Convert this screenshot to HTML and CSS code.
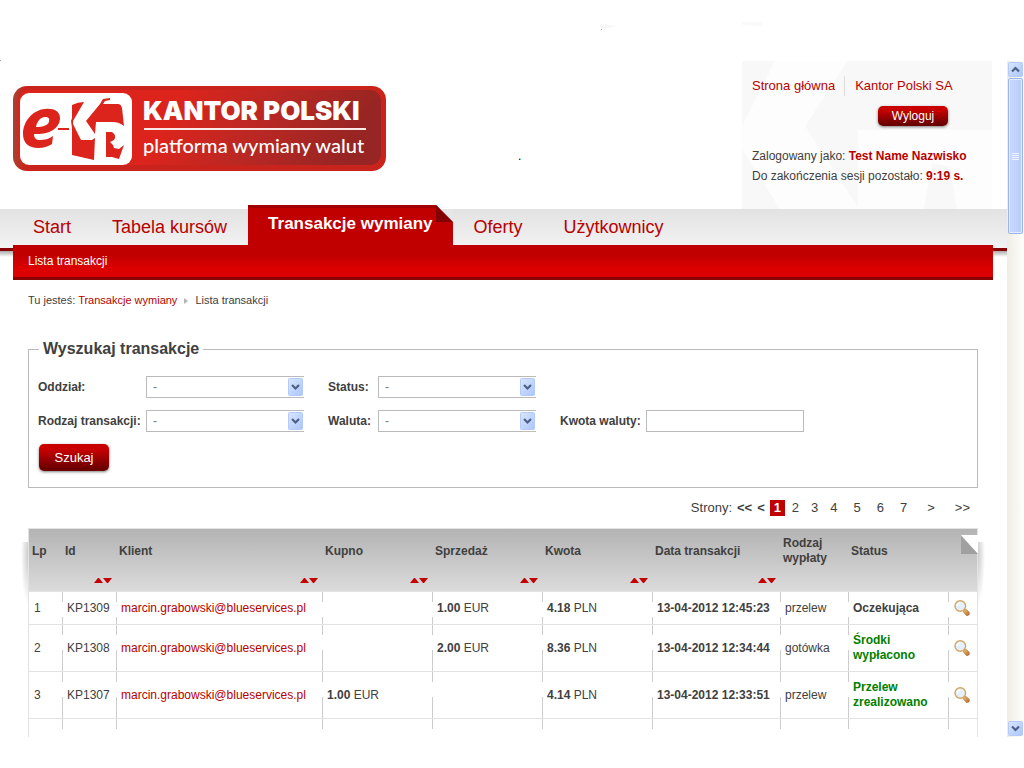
FILE: index.html
```html
<!DOCTYPE html>
<html lang="pl">
<head>
<meta charset="utf-8">
<title>Kantor Polski - Lista transakcji</title>
<link rel="stylesheet" href="styles.css">
</head>
<body>
<svg class="defs" width="0" height="0" aria-hidden="true">
  <defs>
    <linearGradient id="lens-handle" x1="0" y1="0" x2="1" y2="1"><stop offset="0" stop-color="#ecca7c"/><stop offset="1" stop-color="#b0622c"/></linearGradient>
    <symbol id="lens" viewBox="0 0 16 16">
      <path d="M9.500 10.500l1.500-1.500 1.500.8 3 2.800-.3 1.800-1.400 1.400-1.300-.1-2.700-3z" fill="url(#lens-handle)" stroke="#b97a3c" stroke-width=".7"/>
      <circle cx="6.300" cy="6" r="5.300" fill="#e4f0fb" stroke="#d5a562" stroke-width="1.400"/>
      <path d="M3.300 6.200a3 3 0 0 1 2.600-3" fill="none" stroke="#fff" stroke-width="1.200"/>
    </symbol>
    <symbol id="sort" viewBox="0 0 18 5"><path d="M0 5h9L5 0H4zM9 0h9l-4 5h-1z" fill="#c40000"/></symbol>
    <linearGradient id="xp-blue" x1="0" y1="0" x2="1" y2="1"><stop offset="0" stop-color="#dbe6ff"/><stop offset="1" stop-color="#a9c6fb"/></linearGradient>
    <symbol id="drop" viewBox="0 0 15 18"><rect x=".5" y=".5" width="14" height="17" rx="1" fill="url(#xp-blue)" stroke="#b4cafb"/><path d="M4 7l3.500 3.500L11 7" fill="none" stroke="#4d6185" stroke-width="2.200"/></symbol>
  </defs>
</svg>

<svg class="specks" viewBox="0 0 1024 61" preserveAspectRatio="xMinYMin" aria-hidden="true">
  <path d="M600 27l5-3 11 2-6 2-9 1z" fill="#f7f7f7"/><path d="M742 22h21v4l-21-1z" fill="#fafafa"/>
  <path d="M601 29h1v1h-1zM0 60h1v1H0z" fill="#aaa"/>
</svg>

<div class="window">
  <div class="page">
    <header class="top">
      <a class="logo" href="#" aria-label="Kantor Polski">
        <svg width="373" height="86" viewBox="0 0 373 86">
          <defs>
            <linearGradient id="lg" x1="0" y1="0" x2="1" y2=".12"><stop offset="0" stop-color="#dc241c"/><stop offset=".45" stop-color="#dc241c"/><stop offset=".72" stop-color="#b92824"/><stop offset="1" stop-color="#962523"/></linearGradient>
            <linearGradient id="le" x1="0" y1="0" x2="1" y2="0"><stop offset="0" stop-color="#a64334"/><stop offset=".03" stop-color="#c9241c"/><stop offset="1" stop-color="#c9241c"/></linearGradient>
          </defs>
          <rect y="0" width="373" height="85" rx="14" fill="url(#le)"/>
          <rect x="5" y="4" width="363" height="75" rx="11" fill="url(#lg)"/>
          <rect x="7" y="7" width="112" height="72" rx="9" fill="#fff"/>
          <path fill="#dc241c" fill-rule="evenodd" d="M47 32c0-7-7-10-15-9C19 24 10 36 10 48c0 9 6 14 15 14 6 0 11-2 14-4l1-8c-4 3-9 4-13 4-4 0-6-2-6-6 14 1 26-5 26-16zM23 41c1-6 5-10 9-10 3 0 5 1 4 4 0 4-6 6-13 6z"/>
          <path fill="#dc241c" d="M45 42h11v2H45zM59 19q6-3 12-3L60 35v3l8 16h11l3-2-1 22-22-5V42l-1-7 1-3zM73 35l14-17 3-5 7-1v2l-5 1-2 3h15q3 0 4 4l2 18q-5-4-11-4H83l-1 12z"/>
          <path fill="#dc241c" d="M93 46h6q5 3 2 8l-4 2q3 2 4 6l5 1 5-4-5 14-7-2h-6z"/>
          <text x="130" y="34" class="logo-name">KANTOR POLSKI</text>
          <path d="M131 42h222v2H131z" fill="#fbe9e7"/>
          <text x="130" y="67" class="logo-line">platforma wymiany walut</text>
        </svg>
      </a>
      <span class="dot">.</span>
      <div class="account">
        <svg class="watermark" viewBox="0 0 250 148" preserveAspectRatio="none" aria-hidden="true">
          <path d="M33 0h73L63 65l54 83H38L0 88V65zM116 69h134v79h-35l-7-42-18-4-8 46h-66z" fill="#fdfdfd"/>
        </svg>
        <nav class="quick">
          <a href="#">Strona główna</a>
          <a href="#">Kantor Polski SA</a>
        </nav>
        <button class="btn logout" type="button">Wyloguj</button>
        <p>Zalogowany jako: <strong>Test Name Nazwisko</strong></p>
        <p>Do zakończenia sesji pozostało: <strong>9:19 s.</strong></p>
      </div>
    </header>

    <div class="band">
      <nav class="tabs">
        <a href="#">Start</a>
        <a href="#">Tabela kursów</a>
        <a href="#" class="active">Transakcje wymiany<svg class="fold" width="17" height="17" viewBox="0 0 17 17" aria-hidden="true"><path d="M0 0h17v17z" fill="#fff"/><path d="M4 4h13v13z" fill="#e6e6e6"/><path d="M0 0v17h17z" fill="#840000"/></svg></a>
        <a href="#">Oferty</a>
        <a href="#">Użytkownicy</a>
      </nav>
      <nav class="subnav"><a href="#">Lista transakcji</a></nav>
    </div>

    <main>
      <nav class="crumbs">
        <span>Tu jesteś: <a href="#">Transakcje wymiany</a></span>
        <svg width="4" height="6" viewBox="0 0 4 6" aria-hidden="true"><path d="M0 0l4 3-4 3z" fill="#b5b5b5"/></svg>
        <span>Lista transakcji</span>
      </nav>

      <form>
        <fieldset>
          <legend>Wyszukaj transakcje</legend>
          <div class="fields">
            <label for="branch">Oddział:</label>
            <span class="pick"><select id="branch"><option>-</option></select><svg aria-hidden="true"><use href="#drop"/></svg></span>
            <label for="status">Status:</label>
            <span class="pick"><select id="status"><option>-</option></select><svg aria-hidden="true"><use href="#drop"/></svg></span>
            <label for="kind" class="first">Rodzaj transakcji:</label>
            <span class="pick"><select id="kind"><option>-</option></select><svg aria-hidden="true"><use href="#drop"/></svg></span>
            <label for="currency">Waluta:</label>
            <span class="pick"><select id="currency"><option>-</option></select><svg aria-hidden="true"><use href="#drop"/></svg></span>
            <label for="amount">Kwota waluty:</label>
            <input id="amount" type="text">
          </div>
          <button class="btn search" type="submit">Szukaj</button>
        </fieldset>
      </form>

      <nav class="pager">
        <span>Strony:</span><b>&lt;&lt;</b><b>&lt;</b><b class="current">1</b><a href="#">2</a><a href="#">3</a><a href="#">4</a><a href="#" class="wide">5</a><a href="#" class="wide">6</a><a href="#" class="wide">7</a><a href="#" class="step">&gt;</a><a href="#" class="step">&gt;&gt;</a>
      </nav>

      <div class="listing">
        <svg class="corner" width="17" height="19" viewBox="0 0 17 19" aria-hidden="true"><path d="M0 0h17v19z" fill="#fff"/><path d="M0 1v18h17z" fill="#a0a0a0"/></svg>
        <table>
          <colgroup><col class="c-lp"><col class="c-id"><col class="c-client"><col class="c-sum"><col class="c-sum"><col class="c-sum"><col class="c-date"><col class="c-kind"><col class="c-status"><col class="c-icon"></colgroup>
          <thead>
            <tr>
              <th><div>Lp</div></th>
              <th><div>Id</div><svg><use href="#sort"/></svg></th>
              <th><div>Klient</div><svg><use href="#sort"/></svg></th>
              <th><div>Kupno</div><svg><use href="#sort"/></svg></th>
              <th><div>Sprzedaż</div><svg><use href="#sort"/></svg></th>
              <th><div>Kwota</div><svg><use href="#sort"/></svg></th>
              <th><div>Data transakcji</div><svg><use href="#sort"/></svg></th>
              <th><div>Rodzaj wypłaty</div></th>
              <th><div>Status</div></th>
              <th></th>
            </tr>
          </thead>
          <tbody>
            <tr><td>1</td><td>KP1309</td><td><a href="#">marcin.grabowski@blueservices.pl</a></td><td></td><td><b>1.00</b> EUR</td><td><b>4.18</b> PLN</td><td><b>13-04-2012 12:45:23</b></td><td>przelew</td><td class="state">Oczekująca</td><td><a href="#" aria-label="Szczegóły"><svg><use href="#lens"/></svg></a></td></tr>
            <tr><td>2</td><td>KP1308</td><td><a href="#">marcin.grabowski@blueservices.pl</a></td><td></td><td><b>2.00</b> EUR</td><td><b>8.36</b> PLN</td><td><b>13-04-2012 12:34:44</b></td><td>gotówka</td><td class="state done">Środki wypłacono</td><td><a href="#" aria-label="Szczegóły"><svg><use href="#lens"/></svg></a></td></tr>
            <tr><td>3</td><td>KP1307</td><td><a href="#">marcin.grabowski@blueservices.pl</a></td><td><b>1.00</b> EUR</td><td></td><td><b>4.14</b> PLN</td><td><b>13-04-2012 12:33:51</b></td><td>przelew</td><td class="state done">Przelew zrealizowano</td><td><a href="#" aria-label="Szczegóły"><svg><use href="#lens"/></svg></a></td></tr>
            <tr class="cut"><td></td><td></td><td></td><td></td><td></td><td></td><td></td><td></td><td></td><td></td></tr>
          </tbody>
        </table>
      </div>
    </main>
  </div>

  <div class="scroll" aria-hidden="true">
    <svg class="arrow" viewBox="0 0 17 17"><rect x="1.500" y="1.500" width="14" height="14" rx="1" fill="url(#xp-blue)" stroke="#b4cafb"/><path d="M5 10.500L8.500 7l3.500 3.500" fill="none" stroke="#4d6185" stroke-width="2.200"/></svg>
    <div class="thumb"><i></i><i></i><i></i><i></i></div>
    <svg class="arrow last" viewBox="0 0 17 17"><rect x="1.500" y="1.500" width="14" height="14" rx="1" fill="url(#xp-blue)" stroke="#b4cafb"/><path d="M5 6.500l3.500 3.500L12 6.500" fill="none" stroke="#4d6185" stroke-width="2.200"/></svg>
  </div>
</div>
</body>
</html>
```

FILE: styles.css
```css
* { box-sizing: border-box; }
body {
  margin: 0;
  background: #fff;
  color: #404040;
  font: 12px/15px "Liberation Sans", Arial, sans-serif;
}
a { color: #b80000; text-decoration: none; }
p { margin: 0; }
.defs { position: absolute; }
.specks { display: block; width: 100%; height: 61px; }

.window { display: flex; margin-bottom: 31px; }
.page { flex: 1; min-width: 0; }

.top { display: flex; align-items: flex-start; padding: 0 15px 0 13px; }
.logo { padding-top: 25px; }
.logo svg { display: block; }
.logo-name { font: 900 26px Inter, sans-serif; fill: #fff; }
.logo-line { font: 500 20px Lato, sans-serif; fill: #fff; }
.dot { margin: 88px auto 0 132px; color: #000; }

.account {
  position: relative;
  width: 250px;
  height: 148px;
  padding: 15px 10px 0;
  background: #f8f8f8;
  line-height: 20px;
}
.watermark { position: absolute; inset: 0; width: 100%; height: 100%; }
.account > :not(.watermark) { position: relative; }
.account strong { color: #b80000; }
.quick { display: flex; font-size: 13px; }
.quick a + a { margin-left: 9px; padding-left: 10px; border-left: 1px solid #ddd; }

.btn {
  display: block;
  width: 70px;
  border: 0;
  border-radius: 5px;
  background: linear-gradient(#c80000 20%, #6c0000 90%);
  box-shadow: 0 1px 3px rgba(0, 0, 0, .5);
  color: #fff;
  font: inherit;
  padding: 0;
}
.logout { height: 20px; margin: 10px 0 20px 126px; }
.search { height: 27px; margin-left: 1px; font-size: 13px; }

.band {
  background: linear-gradient(#e2e2e2, #f3f3f3) 0 0 / 100% 39px no-repeat,
    linear-gradient(#8a0000, #8a0000) 0 39px / 100% 3px no-repeat,
    linear-gradient(#aaa, #fff) 0 42px / 100% 6px no-repeat;
}
.tabs { display: flex; gap: 1px; height: 36px; margin: 0 14px 0 13px; font-size: 18px; line-height: 36px; }
.tabs a { padding: 0 20px; }
.tabs .active {
  position: relative;
  margin-top: -4px;
  height: 40px;
  border-top: 3px solid #a00000;
  background: #c00000;
  color: #fff;
  font-size: 17px;
  font-weight: bold;
  line-height: 32px;
}
.fold { position: absolute; top: -3px; right: 0; }
.subnav {
  margin: 0 14px 0 13px;
  padding: 0 15px;
  border-bottom: 3px solid #8a0000;
  background: linear-gradient(#c00000 30%, #dd0000 75%);
  line-height: 32px;
}
.subnav a { color: #fff; }

main { padding: 13px 29px 0 28px; }
.crumbs { display: flex; align-items: center; gap: 7px; font-size: 11px; }

fieldset { margin: 30px 0 0; padding: 16px 10px 16px 9px; border: 1px solid #bbb; }
legend { margin: 0 0 0 1px; padding: 0 4px; font-size: 16px; font-weight: bold; line-height: 22px; }
.fields {
  display: grid;
  grid-template-columns: 108px 158px 74px 158px 110px 158px;
  gap: 12px 0;
  align-items: center;
  margin-bottom: 12px;
}
label { font-weight: bold; padding-left: 24px; white-space: nowrap; }
label:first-child, label.first { padding-left: 0; grid-column: 1; }
.pick { position: relative; display: block; }
.pick select, .fields input {
  display: block;
  width: 100%;
  height: 22px;
  margin: 0;
  padding: 0 6px;
  border: 1px solid #bbb;
  border-radius: 0;
  background: #fff;
  color: #777;
  font: inherit;
  appearance: none;
}
.pick select { border-right: 0; }
.pick svg { position: absolute; top: 2px; right: 1px; width: 15px; height: 18px; pointer-events: none; }

.pager { display: flex; justify-content: flex-end; padding: 12px 8px 12px 0; font-size: 13px; line-height: 16px; }
.pager a, .pager span { color: #404040; }
.pager b { margin-left: 5px; }
.pager .current { width: 15px; margin-right: -5px; background: #c00000; color: #fff; text-align: center; }
.pager a { margin-left: 12px; }
.pager .wide { margin-left: 16px; }
.pager .step { margin-left: 20px; }

.listing { position: relative; }
.listing::before, .listing::after {
  content: "";
  position: absolute;
  top: 14px;
  width: 7px;
  height: 64px;
}
.listing::before { right: 100%; background: radial-gradient(ellipse 7px 50px at 100% 20%, #ccc, #fff); }
.listing::after { left: 100%; background: radial-gradient(ellipse 7px 50px at 0 20%, #ccc, #fff); }
.corner { position: absolute; top: 7px; right: 0; }
table {
  width: 100%;
  table-layout: fixed;
  border-collapse: separate;
  border-spacing: 0;
  border: 1px solid #e2e2e2;
  border-bottom: 0;
}
.c-lp { width: 33px; }
.c-id { width: 54px; }
.c-client { width: 206px; }
.c-sum { width: 110px; }
.c-date { width: 128px; }
.c-kind { width: 68px; }
.c-status { width: 100px; }
thead { background: linear-gradient(#b3b3b3, #dcdcdc); }
th { padding: 7px 4px 8px 3px; border-bottom: 1px solid #e2e2e2; text-align: left; vertical-align: top; }
th div { display: flex; align-items: center; height: 30px; }
th svg { display: block; width: 18px; height: 5px; margin: 12px 0 0 auto; }
td { height: 33px; padding: 8px 4px 8px 5px; border-bottom: 1px solid #e2e2e2; }
td + td {
  background: linear-gradient(#ccc 10px, transparent 10px, transparent 25px, #ccc 25px) 0 0 / 1px 100% no-repeat;
}
td a { display: block; }
td svg { display: block; width: 16px; height: 16px; }
td:last-child { padding-left: 6px; }
.state { font-weight: bold; }
.done { color: #008000; }
.cut td { height: 18px; padding: 0; border: 0; }

.scroll {
  display: flex;
  flex-direction: column;
  width: 17px;
  background: linear-gradient(90deg, #eeede5, #fefefb);
}
.arrow { display: block; width: 17px; height: 17px; }
.arrow.last { margin-top: auto; }
.thumb {
  display: flex;
  flex-direction: column;
  align-items: center;
  justify-content: center;
  gap: 1px;
  height: 156px;
  margin: 0 1px;
  border: 1px solid #98b4ee;
  border-radius: 2px;
  background: linear-gradient(90deg, #cad8fd, #b8ccfb);
  box-shadow: inset 0 0 0 1px #e4ecff;
}
.thumb i { width: 7px; height: 1px; background: #eef4fe; }
```
